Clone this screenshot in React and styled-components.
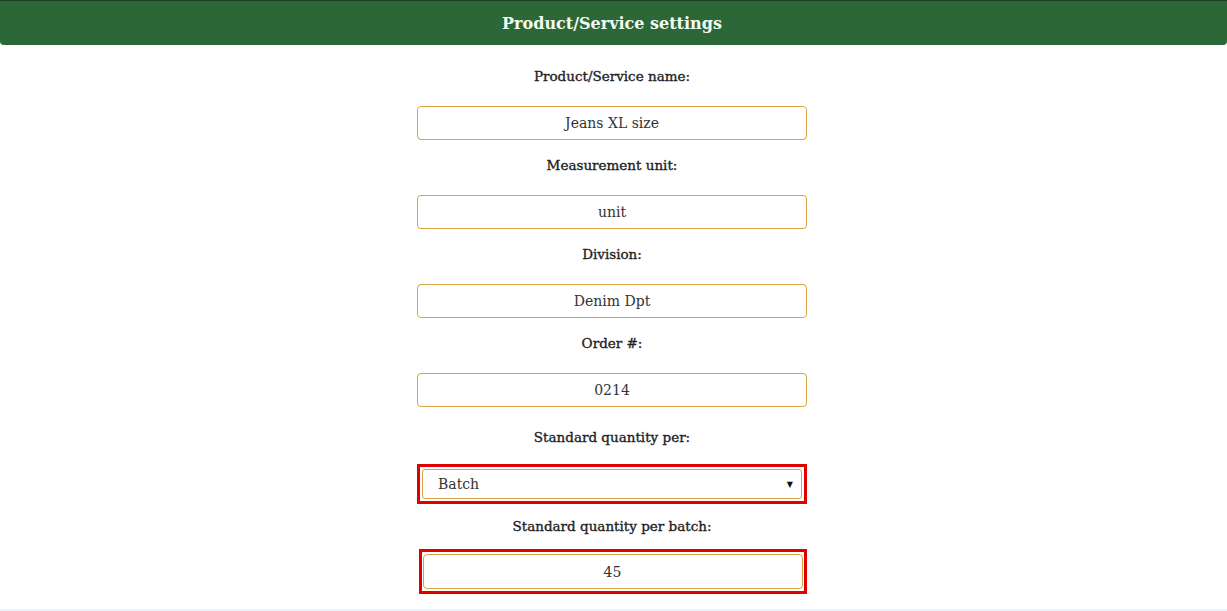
import React from 'react';
import styled, { createGlobalStyle } from 'styled-components';

const GlobalStyle = createGlobalStyle`
  html, body {
    margin: 0;
    padding: 0;
    background: #fff;
  }
  body {
    font-family: 'DejaVu Serif', 'Liberation Serif', serif;
    color: #333;
  }
`;

const Page = styled.div`
  height: 611px;
  display: flex;
  flex-direction: column;
  overflow: hidden;
`;

const Header = styled.div`
  height: 44px;
  background: #2b6737;
  border-top: 1px solid #1c3d23;
  border-radius: 0 0 4px 4px;
  display: flex;
  align-items: center;
  justify-content: center;
  color: #f4fbf0;
  font-size: 16px;
  font-weight: bold;
  padding-right: 3px;
`;

const Form = styled.div`
  flex: 1;
  display: flex;
  flex-direction: column;
  align-items: center;
  padding-top: 21px;
  padding-right: 3px;
  border-bottom: 2px solid #edf3f8;
`;

const Label = styled.div`
  font-size: 13.5px;
  line-height: 20px;
  margin-top: ${(p) => p.$top || 0}px;
  margin-bottom: ${(p) => p.$bottom || 20}px;
  color: #222;
  -webkit-text-stroke: 0.35px #222;
`;

const TextInput = styled.div`
  box-sizing: border-box;
  width: ${(p) => (p.$fill ? '100%' : '390px')};
  height: ${(p) => p.$h || 34}px;
  border: 1px solid #d9a441;
  border-radius: 4px;
  display: flex;
  align-items: center;
  justify-content: center;
  font-size: 14px;
  color: #333;
`;

const Highlight = styled.div`
  box-sizing: border-box;
  border: 3px solid #e00000;
  padding: ${(p) => p.$pad};
  width: ${(p) => p.$w}px;
  margin-left: ${(p) => p.$shift || 0}px;
`;

const Select = styled.div`
  box-sizing: border-box;
  height: 30px;
  border: 1px solid #d9a441;
  border-radius: 3px;
  display: flex;
  align-items: center;
  justify-content: space-between;
  padding: 0 8px 0 15px;
  font-size: 14px;
  color: #333;
`;

const Arrow = styled.span`
  font-size: 8px;
  color: #111;
`;

const fields = [
  { label: 'Product/Service name:', value: 'Jeans XL size' },
  { label: 'Measurement unit:', value: 'unit' },
  { label: 'Division:', value: 'Denim Dpt' },
  { label: 'Order #:', value: '0214' },
];

export default function App() {
  return (
    <Page>
      <GlobalStyle />
      <Header>Product/Service settings</Header>
      <Form>
        {fields.map((f, i) => (
          <React.Fragment key={f.label}>
            <Label $top={i === 0 ? 0 : 15}>{f.label}</Label>
            <TextInput>{f.value}</TextInput>
          </React.Fragment>
        ))}
        <Label $top={20} $bottom={17}>Standard quantity per:</Label>
        <Highlight $w={390} $pad="2px">
          <Select>
            <span>Batch</span>
            <Arrow>▼</Arrow>
          </Select>
        </Highlight>
        <Label $top={12} $bottom={13}>Standard quantity per batch:</Label>
        <Highlight $w={388} $pad="2px 1px" $shift={1}>
          <TextInput $h={35} $fill>45</TextInput>
        </Highlight>
      </Form>
    </Page>
  );
}
